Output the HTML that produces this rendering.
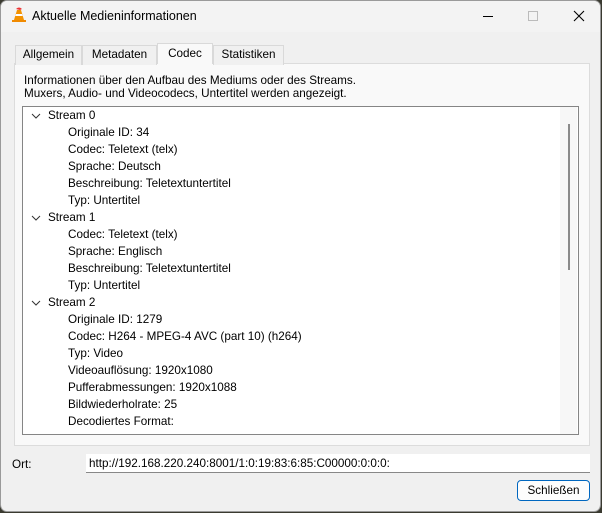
<!DOCTYPE html>
<html><head><meta charset="utf-8"><style>
*{margin:0;padding:0;box-sizing:border-box}
html,body{width:602px;height:513px;overflow:hidden}
body{background:#3a3a30;font-family:"Liberation Sans",sans-serif;font-size:11.7px;color:#000;position:relative}
.win{position:absolute;left:0;top:0;width:601px;height:512px;background:#f0f0f0;border:1px solid #9a9a9a;border-radius:7px;overflow:hidden}
.title{position:absolute;left:0;top:0;width:100%;height:31px;background:#f3f3f3}
.title .t{position:absolute;left:31px;top:8px;font-size:12.5px}
.tab{position:absolute;top:43px;height:20px;border:1px solid #d9d9d9;border-bottom:none;background:#f0f0f0;text-align:center;line-height:18px}
.panel{position:absolute;left:13px;top:62px;width:576px;height:383px;background:#f9f9f9;border:1px solid #dcdcdc}
.tree{position:absolute;left:21px;top:105px;width:557px;height:329px;background:#fff;border:1px solid #858585}
.row{position:absolute;height:17px;line-height:17px;white-space:nowrap}
.sb{position:absolute;left:537px;top:0;width:17px;height:327px;background:#f7f7f7}
.thumb{position:absolute;left:567px;top:123px;width:2px;height:146px;background:#8a8a8a}
</style></head><body>
<div class="win">
<div class="title">
<svg style="position:absolute;left:10px;top:5px" width="16" height="18" viewBox="0 0 16 18">
<path d="M5 3 Q8 0 11 3 L9 4 Z" fill="#e33"/>
<path d="M6 4 L10 4 L13 14 L3 14 Z" fill="#f39200"/>
<path d="M5 8 L11 8 L11.7 10 L4.3 10 Z" fill="#fff"/>
<path d="M1 14 L15 14 L15 16 L1 16 Z" fill="#f08a00"/>
</svg>
<span class="t">Aktuelle Medieninformationen</span>
<div style="position:absolute;left:482px;top:15px;width:10px;height:1px;background:#000"></div>
<div style="position:absolute;left:527px;top:10px;width:10px;height:10px;border:1px solid #bbb"></div>
<svg style="position:absolute;left:572px;top:9px" width="12" height="12"><path d="M1 1L11 11M11 1L1 11" stroke="#000" stroke-width="1.1"/></svg>
</div>
<div class="panel"></div>
<div class="tab" style="left:14px;width:67px;top:44px">Allgemein</div>
<div class="tab" style="left:81px;width:75px;top:44px">Metadaten</div>
<div class="tab" style="left:156px;width:56px;top:42px;height:21px;background:#f9f9f9;z-index:2;line-height:20px">Codec</div>
<div class="tab" style="left:212px;width:71px;top:44px">Statistiken</div>
<div style="position:absolute;left:23px;top:73px;line-height:13px">Informationen über den Aufbau des Mediums oder des Streams.<br>Muxers, Audio- und Videocodecs, Untertitel werden angezeigt.</div>
<div class="tree"><div class="sb"></div></div>
<div class="thumb"></div>
<svg style="position:absolute;left:30px;top:112px" width="10" height="6"><path d="M1 1L5 5L9 1" stroke="#333" fill="none"/></svg>
<div class="row" style="left:47px;top:106px">Stream 0</div>
<div class="row" style="left:67px;top:123px">Originale ID: 34</div>
<div class="row" style="left:67px;top:140px">Codec: Teletext (telx)</div>
<div class="row" style="left:67px;top:157px">Sprache: Deutsch</div>
<div class="row" style="left:67px;top:174px">Beschreibung: Teletextuntertitel</div>
<div class="row" style="left:67px;top:191px">Typ: Untertitel</div>
<svg style="position:absolute;left:30px;top:214px" width="10" height="6"><path d="M1 1L5 5L9 1" stroke="#333" fill="none"/></svg>
<div class="row" style="left:47px;top:208px">Stream 1</div>
<div class="row" style="left:67px;top:225px">Codec: Teletext (telx)</div>
<div class="row" style="left:67px;top:242px">Sprache: Englisch</div>
<div class="row" style="left:67px;top:259px">Beschreibung: Teletextuntertitel</div>
<div class="row" style="left:67px;top:276px">Typ: Untertitel</div>
<svg style="position:absolute;left:30px;top:299px" width="10" height="6"><path d="M1 1L5 5L9 1" stroke="#333" fill="none"/></svg>
<div class="row" style="left:47px;top:293px">Stream 2</div>
<div class="row" style="left:67px;top:310px">Originale ID: 1279</div>
<div class="row" style="left:67px;top:327px">Codec: H264 - MPEG-4 AVC (part 10) (h264)</div>
<div class="row" style="left:67px;top:344px">Typ: Video</div>
<div class="row" style="left:67px;top:361px">Videoauflösung: 1920x1080</div>
<div class="row" style="left:67px;top:378px">Pufferabmessungen: 1920x1088</div>
<div class="row" style="left:67px;top:395px">Bildwiederholrate: 25</div>
<div class="row" style="left:67px;top:412px">Decodiertes Format:</div>
<div style="position:absolute;left:11px;top:457px">Ort:</div>
<div style="position:absolute;left:85px;top:453px;width:504px;height:19px;background:#fff;border-bottom:1px solid #888;padding-left:3px;line-height:19px;white-space:nowrap">http://192.168.220.240:8001/1:0:19:83:6:85:C00000:0:0:0:</div>
<div style="position:absolute;left:516px;top:479px;width:73px;height:21px;background:#fdfdfd;border:1px solid #0067c0;border-radius:4px;text-align:center;line-height:19px">Schließen</div>
</div>
</body></html>
